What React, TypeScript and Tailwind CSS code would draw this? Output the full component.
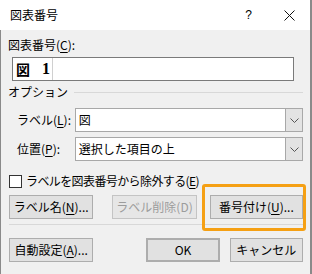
import React from "react";

const font = { fontFamily: '"Noto Sans CJK JP", "Noto Sans", sans-serif' };

function Chevron() {
  return (
    <svg width="9" height="5" viewBox="0 0 9 5" className="block">
      <path d="M0.5 0.5 L4.5 4.5 L8.5 0.5" fill="none" stroke="#555" strokeWidth="1" />
    </svg>
  );
}

function Select({ value }: { value: string }) {
  return (
    <div className="flex h-[24px] w-[229px] border border-[#a8a8a8] bg-white">
      <div className="flex flex-1 items-center pl-[3px] text-[12px] leading-none text-black">{value}</div>
      <div className="flex w-[17px] items-center justify-center border-l border-[#a8a8a8] bg-[#e3e3e3]">
        <Chevron />
      </div>
    </div>
  );
}

function Btn({
  children,
  className = "",
  disabled = false,
}: {
  children: React.ReactNode;
  className?: string;
  disabled?: boolean;
}) {
  return (
    <button
      type="button"
      className={
        "flex h-[24px] items-center justify-center border text-[12px] leading-none " +
        (disabled
          ? "border-[#c4c4c4] bg-[#e6e6e6] text-[#9c9c9c] "
          : "border-[#adadad] bg-[#e1e1e1] text-black ") +
        className
      }
    >
      {children}
    </button>
  );
}

const U = ({ children }: { children: React.ReactNode }) => (
  <span className="underline underline-offset-[2px]">{children}</span>
);

export default function App() {
  return (
    <div style={font} className="relative flex h-[274px] w-[312px] flex-col border-r-2 border-[#8a8a8a] bg-[#f0f0f0] text-black">
      {/* タイトルバー */}
      <div className="flex h-[30px] items-center bg-white">
        <span className="pl-[10px] text-[12px] leading-none">図表番号</span>
        <span className="ml-auto mr-[32px] text-[12px] leading-none" style={{ fontFamily: '"Liberation Sans", sans-serif' }}>?</span>
        <svg width="11" height="11" viewBox="0 0 11 11" className="mr-[15px]">
          <path d="M0.5 0.5 L10.5 10.5 M10.5 0.5 L0.5 10.5" stroke="#111" strokeWidth="1" />
        </svg>
      </div>

      <div className="flex flex-1 flex-col border-l border-[#8a8a8a] px-[7px] pt-[7px]">
        <div className="text-[12px] leading-[16px]">
          図表番号(<U>C</U>):
        </div>
        <div className="ml-[4px] mt-[4px] flex h-[24px] w-[282px] items-center border border-[#7a7a7a] bg-white">
          <div className="flex h-full items-center border-r border-[#d0d0d0] pl-[3px] pr-[2px]">
            <span className="text-[14px] font-bold leading-none">図</span>
            <span className="ml-[12px] text-[16px] font-bold leading-none" style={{ fontFamily: '"Liberation Serif", serif' }}>1</span>
          </div>
        </div>

        {/* オプション */}
        <div className="mt-[3px] flex items-center">
          <span className="text-[12px] leading-[16px]">オプション</span>
          <div className="ml-[6px] h-px flex-1 bg-[#d8d8d8]" />
        </div>

        <div className="mt-[8px] flex items-center">
          <span className="w-[67px] pl-[9px] text-[12px] leading-none">
            ラベル(<U>L</U>):
          </span>
          <Select value="図" />
        </div>
        <div className="mt-[5px] flex items-center">
          <span className="w-[67px] pl-[9px] text-[12px] leading-none">
            位置(<U>P</U>):
          </span>
          <Select value="選択した項目の上" />
        </div>

        <div className="ml-[1px] mt-[12px] flex h-[16px] items-center">
          <div className="h-[13px] w-[13px] border border-[#333] bg-white" />
          <span className="ml-[4px] text-[12px] leading-none tracking-[-0.6px]">
            ラベルを図表番号から除外する(<U>E</U>)
          </span>
        </div>

        <div className="mt-[6px] flex">
          <Btn className="ml-[1px] w-[85px]">
            ラベル名(<U>N</U>)...
          </Btn>
          <Btn disabled className="ml-[19px] w-[85px]">
            ラベル削除(D)
          </Btn>
          <Btn className="ml-[13px] w-[94px]">
            番号付け(<U>U</U>)...
          </Btn>
        </div>

        <div className="ml-[1px] mt-[5px] h-px w-[297px] bg-[#d8d8d8]" />

        <div className="mt-[13px] flex">
          <Btn className="ml-[1px] w-[85px]">
            自動設定(<U>A</U>)...
          </Btn>
          <Btn className="ml-[53px] w-[74px] border-2 border-[#0067c0]">OK</Btn>
          <Btn className="ml-[10px] w-[74px]">キャンセル</Btn>
        </div>
      </div>

      {/* 強調枠 */}
      <div className="pointer-events-none absolute left-[202px] top-[184px] h-[47px] w-[104px] rounded-[3px] border-[3px] border-[#f5a014]" />
    </div>
  );
}
